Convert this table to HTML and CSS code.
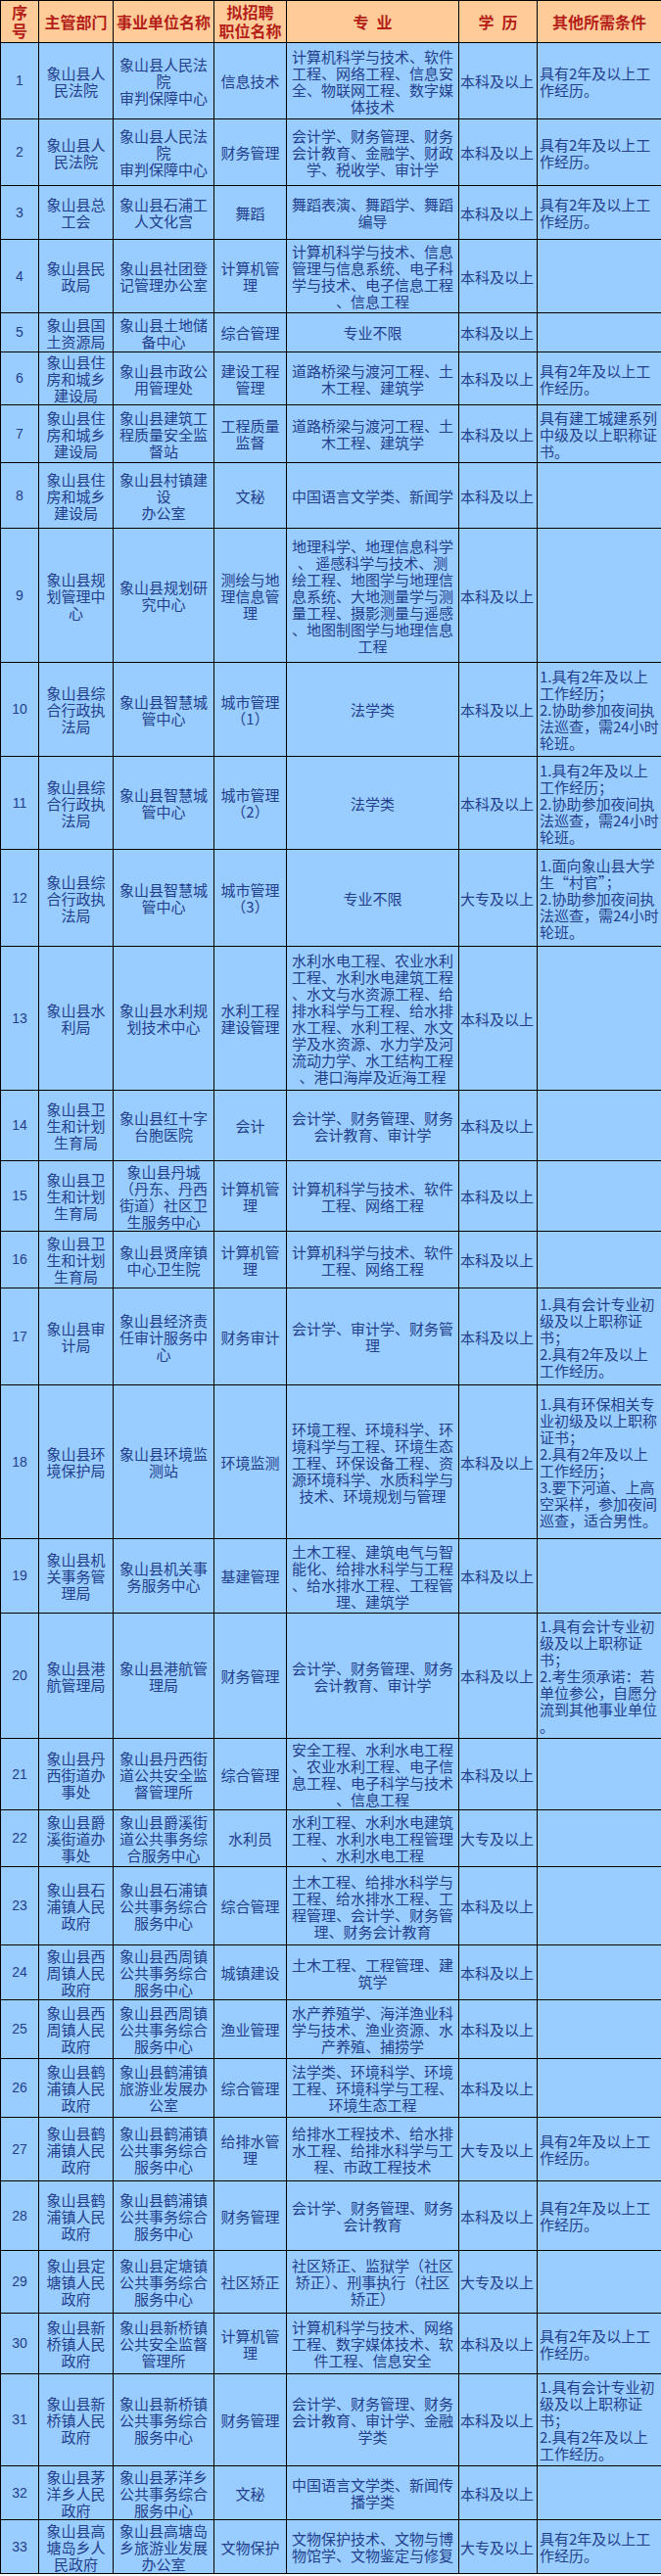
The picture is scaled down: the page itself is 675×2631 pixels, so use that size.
FILE: index.html
```html
<!DOCTYPE html>
<html lang="zh-CN">
<head>
<meta charset="utf-8">
<title>象山县事业单位招聘职位表</title>
<link rel="stylesheet" href="styles.css">
</head>
<body>
<table class="jobs">
<colgroup>
<col class="c-no"><col class="c-dept"><col class="c-unit"><col class="c-pos"><col class="c-major"><col class="c-edu"><col class="c-cond">
</colgroup>
<thead>
<tr class="head">
<th><span class="hl">序</span><span class="hl">号</span></th><th>主管部门</th><th>事业单位名称</th><th><span class="hl">拟招聘</span><span class="hl">职位名称</span></th><th>专&ensp;业</th><th>学&ensp;历</th><th>其他所需条件</th>
</tr>
</thead>
<tbody>
<tr style="height:78px"><td class="no">1</td><td class="dept">象山县人<br>民法院</td><td class="unit">象山县人民法<br>院<br>审判保障中心</td><td class="pos">信息技术</td><td class="major">计算机科学与技术、软件<br>工程、网络工程、信息安<br>全、物联网工程、数字媒<br>体技术</td><td class="edu">本科及以上</td><td class="cond">具有2年及以上工<br>作经历。</td></tr>
<tr style="height:68px"><td class="no">2</td><td class="dept">象山县人<br>民法院</td><td class="unit">象山县人民法<br>院<br>审判保障中心</td><td class="pos">财务管理</td><td class="major">会计学、财务管理、财务<br>会计教育、金融学、财政<br>学、税收学、审计学</td><td class="edu">本科及以上</td><td class="cond">具有2年及以上工<br>作经历。</td></tr>
<tr style="height:55px"><td class="no">3</td><td class="dept">象山县总<br>工会</td><td class="unit">象山县石浦工<br>人文化宫</td><td class="pos">舞蹈</td><td class="major">舞蹈表演、舞蹈学、舞蹈<br>编导</td><td class="edu">本科及以上</td><td class="cond">具有2年及以上工<br>作经历。</td></tr>
<tr style="height:75px"><td class="no">4</td><td class="dept">象山县民<br>政局</td><td class="unit">象山县社团登<br>记管理办公室</td><td class="pos">计算机管<br>理</td><td class="major">计算机科学与技术、信息<br>管理与信息系统、电子科<br>学与技术、电子信息工程<br>、信息工程</td><td class="edu">本科及以上</td><td class="cond"></td></tr>
<tr style="height:40px"><td class="no">5</td><td class="dept">象山县国<br>土资源局</td><td class="unit">象山县土地储<br>备中心</td><td class="pos">综合管理</td><td class="major">专业不限</td><td class="edu">本科及以上</td><td class="cond"></td></tr>
<tr style="height:54px"><td class="no">6</td><td class="dept">象山县住<br>房和城乡<br>建设局</td><td class="unit">象山县市政公<br>用管理处</td><td class="pos">建设工程<br>管理</td><td class="major">道路桥梁与渡河工程、土<br>木工程、建筑学</td><td class="edu">本科及以上</td><td class="cond">具有2年及以上工<br>作经历。</td></tr>
<tr style="height:59px"><td class="no">7</td><td class="dept">象山县住<br>房和城乡<br>建设局</td><td class="unit">象山县建筑工<br>程质量安全监<br>督站</td><td class="pos">工程质量<br>监督</td><td class="major">道路桥梁与渡河工程、土<br>木工程、建筑学</td><td class="edu">本科及以上</td><td class="cond">具有建工城建系列<br>中级及以上职称证<br>书。</td></tr>
<tr style="height:67px"><td class="no">8</td><td class="dept">象山县住<br>房和城乡<br>建设局</td><td class="unit">象山县村镇建<br>设<br>办公室</td><td class="pos">文秘</td><td class="major">中国语言文学类、新闻学</td><td class="edu">本科及以上</td><td class="cond"></td></tr>
<tr style="height:137px"><td class="no">9</td><td class="dept">象山县规<br>划管理中<br>心</td><td class="unit">象山县规划研<br>究中心</td><td class="pos">测绘与地<br>理信息管<br>理</td><td class="major">地理科学、地理信息科学<br>、 遥感科学与技术、测<br>绘工程、地图学与地理信<br>息系统、大地测量学与测<br>量工程、摄影测量与遥感<br>、地图制图学与地理信息<br>工程</td><td class="edu">本科及以上</td><td class="cond"></td></tr>
<tr style="height:96px"><td class="no">10</td><td class="dept">象山县综<br>合行政执<br>法局</td><td class="unit">象山县智慧城<br>管中心</td><td class="pos">城市管理<br>（1）</td><td class="major">法学类</td><td class="edu">本科及以上</td><td class="cond">1.具有2年及以上<br>工作经历；<br>2.协助参加夜间执<br>法巡查，需24小时<br>轮班。</td></tr>
<tr style="height:95px"><td class="no">11</td><td class="dept">象山县综<br>合行政执<br>法局</td><td class="unit">象山县智慧城<br>管中心</td><td class="pos">城市管理<br>（2）</td><td class="major">法学类</td><td class="edu">本科及以上</td><td class="cond">1.具有2年及以上<br>工作经历；<br>2.协助参加夜间执<br>法巡查，需24小时<br>轮班。</td></tr>
<tr style="height:99px"><td class="no">12</td><td class="dept">象山县综<br>合行政执<br>法局</td><td class="unit">象山县智慧城<br>管中心</td><td class="pos">城市管理<br>（3）</td><td class="major">专业不限</td><td class="edu">大专及以上</td><td class="cond">1.面向象山县大学<br>生“村官”；<br>2.协助参加夜间执<br>法巡查，需24小时<br>轮班。</td></tr>
<tr style="height:147px"><td class="no">13</td><td class="dept">象山县水<br>利局</td><td class="unit">象山县水利规<br>划技术中心</td><td class="pos">水利工程<br>建设管理</td><td class="major">水利水电工程、农业水利<br>工程、水利水电建筑工程<br>、水文与水资源工程、给<br>排水科学与工程、给水排<br>水工程、水利工程、水文<br>学及水资源、水力学及河<br>流动力学、水工结构工程<br>、港口海岸及近海工程</td><td class="edu">本科及以上</td><td class="cond"></td></tr>
<tr style="height:72px"><td class="no">14</td><td class="dept">象山县卫<br>生和计划<br>生育局</td><td class="unit">象山县红十字<br>台胞医院</td><td class="pos">会计</td><td class="major">会计学、财务管理、财务<br>会计教育、审计学</td><td class="edu">本科及以上</td><td class="cond"></td></tr>
<tr style="height:72px"><td class="no">15</td><td class="dept">象山县卫<br>生和计划<br>生育局</td><td class="unit">象山县丹城<br>（丹东、丹西<br>街道）社区卫<br>生服务中心</td><td class="pos">计算机管<br>理</td><td class="major">计算机科学与技术、软件<br>工程、网络工程</td><td class="edu">本科及以上</td><td class="cond"></td></tr>
<tr style="height:58px"><td class="no">16</td><td class="dept">象山县卫<br>生和计划<br>生育局</td><td class="unit">象山县贤庠镇<br>中心卫生院</td><td class="pos">计算机管<br>理</td><td class="major">计算机科学与技术、软件<br>工程、网络工程</td><td class="edu">本科及以上</td><td class="cond"></td></tr>
<tr style="height:99px"><td class="no">17</td><td class="dept">象山县审<br>计局</td><td class="unit">象山县经济责<br>任审计服务中<br>心</td><td class="pos">财务审计</td><td class="major">会计学、审计学、财务管<br>理</td><td class="edu">本科及以上</td><td class="cond">1.具有会计专业初<br>级及以上职称证<br>书；<br>2.具有2年及以上<br>工作经历。</td></tr>
<tr style="height:157px"><td class="no">18</td><td class="dept">象山县环<br>境保护局</td><td class="unit">象山县环境监<br>测站</td><td class="pos">环境监测</td><td class="major">环境工程、环境科学、环<br>境科学与工程、环境生态<br>工程、环保设备工程、资<br>源环境科学、水质科学与<br>技术、环境规划与管理</td><td class="edu">本科及以上</td><td class="cond">1.具有环保相关专<br>业初级及以上职称<br>证书；<br>2.具有2年及以上<br>工作经历；<br>3.要下河道、上高<br>空采样，参加夜间<br>巡查，适合男性。</td></tr>
<tr style="height:76px"><td class="no">19</td><td class="dept">象山县机<br>关事务管<br>理局</td><td class="unit">象山县机关事<br>务服务中心</td><td class="pos">基建管理</td><td class="major">土木工程、建筑电气与智<br>能化、给排水科学与工程<br>、给水排水工程、工程管<br>理、建筑学</td><td class="edu">本科及以上</td><td class="cond"></td></tr>
<tr style="height:128px"><td class="no">20</td><td class="dept">象山县港<br>航管理局</td><td class="unit">象山县港航管<br>理局</td><td class="pos">财务管理</td><td class="major">会计学、财务管理、财务<br>会计教育、审计学</td><td class="edu">本科及以上</td><td class="cond">1.具有会计专业初<br>级及以上职称证<br>书；<br>2.考生须承诺：若<br>单位参公，自愿分<br>流到其他事业单位<br>。</td></tr>
<tr style="height:73px"><td class="no">21</td><td class="dept">象山县丹<br>西街道办<br>事处</td><td class="unit">象山县丹西街<br>道公共安全监<br>督管理所</td><td class="pos">综合管理</td><td class="major">安全工程、水利水电工程<br>、农业水利工程、电子信<br>息工程、电子科学与技术<br>、信息工程</td><td class="edu">本科及以上</td><td class="cond"></td></tr>
<tr style="height:58px"><td class="no">22</td><td class="dept">象山县爵<br>溪街道办<br>事处</td><td class="unit">象山县爵溪街<br>道公共事务综<br>合服务中心</td><td class="pos">水利员</td><td class="major">水利工程、水利水电建筑<br>工程、水利水电工程管理<br>、水利水电工程</td><td class="edu">大专及以上</td><td class="cond"></td></tr>
<tr style="height:80px"><td class="no">23</td><td class="dept">象山县石<br>浦镇人民<br>政府</td><td class="unit">象山县石浦镇<br>公共事务综合<br>服务中心</td><td class="pos">综合管理</td><td class="major">土木工程、给排水科学与<br>工程、给水排水工程、工<br>程管理、会计学、财务管<br>理、财务会计教育</td><td class="edu">本科及以上</td><td class="cond"></td></tr>
<tr style="height:56px"><td class="no">24</td><td class="dept">象山县西<br>周镇人民<br>政府</td><td class="unit">象山县西周镇<br>公共事务综合<br>服务中心</td><td class="pos">城镇建设</td><td class="major">土木工程、工程管理、建<br>筑学</td><td class="edu">本科及以上</td><td class="cond"></td></tr>
<tr style="height:60px"><td class="no">25</td><td class="dept">象山县西<br>周镇人民<br>政府</td><td class="unit">象山县西周镇<br>公共事务综合<br>服务中心</td><td class="pos">渔业管理</td><td class="major">水产养殖学、海洋渔业科<br>学与技术、渔业资源、水<br>产养殖、捕捞学</td><td class="edu">本科及以上</td><td class="cond"></td></tr>
<tr style="height:60px"><td class="no">26</td><td class="dept">象山县鹤<br>浦镇人民<br>政府</td><td class="unit">象山县鹤浦镇<br>旅游业发展办<br>公室</td><td class="pos">综合管理</td><td class="major">法学类、环境科学、环境<br>工程、环境科学与工程、<br>环境生态工程</td><td class="edu">本科及以上</td><td class="cond"></td></tr>
<tr style="height:65px"><td class="no">27</td><td class="dept">象山县鹤<br>浦镇人民<br>政府</td><td class="unit">象山县鹤浦镇<br>公共事务综合<br>服务中心</td><td class="pos">给排水管<br>理</td><td class="major">给排水工程技术、给水排<br>水工程、给排水科学与工<br>程、市政工程技术</td><td class="edu">大专及以上</td><td class="cond">具有2年及以上工<br>作经历。</td></tr>
<tr style="height:71px"><td class="no">28</td><td class="dept">象山县鹤<br>浦镇人民<br>政府</td><td class="unit">象山县鹤浦镇<br>公共事务综合<br>服务中心</td><td class="pos">财务管理</td><td class="major">会计学、财务管理、财务<br>会计教育</td><td class="edu">本科及以上</td><td class="cond">具有2年及以上工<br>作经历。</td></tr>
<tr style="height:64px"><td class="no">29</td><td class="dept">象山县定<br>塘镇人民<br>政府</td><td class="unit">象山县定塘镇<br>公共事务综合<br>服务中心</td><td class="pos">社区矫正</td><td class="major">社区矫正、监狱学（社区<br>矫正）、刑事执行（社区<br>矫正）</td><td class="edu">大专及以上</td><td class="cond"></td></tr>
<tr style="height:62px"><td class="no">30</td><td class="dept">象山县新<br>桥镇人民<br>政府</td><td class="unit">象山县新桥镇<br>公共安全监督<br>管理所</td><td class="pos">计算机管<br>理</td><td class="major">计算机科学与技术、网络<br>工程、数字媒体技术、软<br>件工程、信息安全</td><td class="edu">本科及以上</td><td class="cond">具有2年及以上工<br>作经历。</td></tr>
<tr style="height:94px"><td class="no">31</td><td class="dept">象山县新<br>桥镇人民<br>政府</td><td class="unit">象山县新桥镇<br>公共事务综合<br>服务中心</td><td class="pos">财务管理</td><td class="major">会计学、财务管理、财务<br>会计教育、审计学、金融<br>学类</td><td class="edu">本科及以上</td><td class="cond">1.具有会计专业初<br>级及以上职称证<br>书；<br>2.具有2年及以上<br>工作经历。</td></tr>
<tr style="height:55px"><td class="no">32</td><td class="dept">象山县茅<br>洋乡人民<br>政府</td><td class="unit">象山县茅洋乡<br>公共事务综合<br>服务中心</td><td class="pos">文秘</td><td class="major">中国语言文学类、新闻传<br>播学类</td><td class="edu">本科及以上</td><td class="cond"></td></tr>
<tr style="height:55px"><td class="no">33</td><td class="dept">象山县高<br>塘岛乡人<br>民政府</td><td class="unit">象山县高塘岛<br>乡旅游业发展<br>办公室</td><td class="pos">文物保护</td><td class="major">文物保护技术、文物与博<br>物馆学、文物鉴定与修复</td><td class="edu">大专及以上</td><td class="cond">具有2年及以上工<br>作经历。</td></tr>
</tbody>
</table>
</body>
</html>
```
FILE: styles.css
```css
html, body {
  margin: 0;
  padding: 0;
  background: #ffffff;
}

.jobs {
  width: 675px;
  table-layout: fixed;
  border-collapse: collapse;
  font-family: "Noto Sans CJK SC", "Liberation Sans", sans-serif;
  font-size: 15px;
  line-height: 17px;
  color: #233f8c;
}

.c-no { width: 39px; }
.c-dept { width: 76px; }
.c-unit { width: 103px; }
.c-pos { width: 74px; }
.c-major { width: 176px; }
.c-edu { width: 80px; }
.c-cond { width: 127px; }

.jobs th,
.jobs td {
  border: 1.5px solid #000000;
  padding: 0 1px;
  vertical-align: middle;
  text-align: center;
  white-space: nowrap;
  overflow: hidden;
}

.head {
  height: 43px;
}

.jobs th {
  background: #ffcc99;
  color: #b51f1a;
  font-weight: bold;
  font-size: 16px;
  line-height: 20px;
}

.jobs th .hl {
  display: block;
  line-height: 19px;
}

.jobs td {
  background: #99ccff;
}

.jobs td.no {
  font-size: 14px;
  font-family: "Liberation Sans", "Noto Sans CJK SC", sans-serif;
}

.jobs td.edu {
  text-align: left;
  padding: 0 1px;
}

.jobs td.cond {
  text-align: left;
  padding: 0 2px;
}
```
